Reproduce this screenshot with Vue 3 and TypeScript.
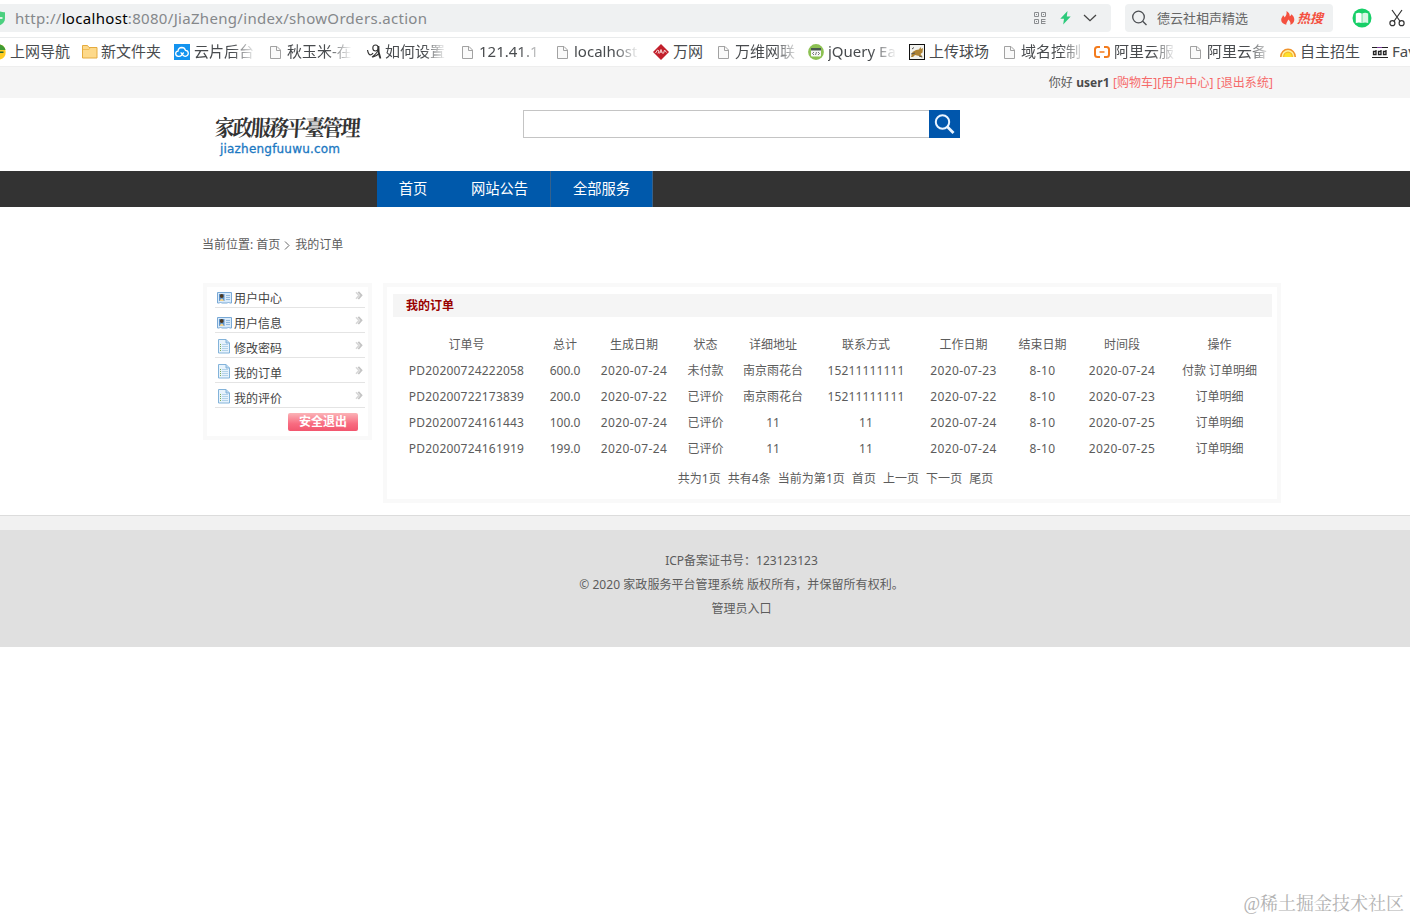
<script setup lang="ts">
interface Bookmark {
  icon: string
  label: string
  fade?: boolean
}
interface Order {
  cells: string[]
}
interface MenuItem {
  icon: 'card' | 'doc'
  label: string
}

const bookmarks: Bookmark[] = [
  { icon: 'nav', label: '上网导航' },
  { icon: 'folder', label: '新文件夹' },
  { icon: 'cloud', label: '云片后台', fade: true },
  { icon: 'file', label: '秋玉米-在', fade: true },
  { icon: 'script', label: '如何设置', fade: true },
  { icon: 'file', label: '121.41.1', fade: true },
  { icon: 'file', label: 'localhost', fade: true },
  { icon: 'diamond', label: '万网' },
  { icon: 'file', label: '万维网联', fade: true },
  { icon: 'jquery', label: 'jQuery Ea', fade: true },
  { icon: 'photo', label: '上传球场' },
  { icon: 'file', label: '域名控制', fade: true },
  { icon: 'aliyun', label: '阿里云服', fade: true },
  { icon: 'file', label: '阿里云备', fade: true },
  { icon: 'rainbow', label: '自主招生' },
  { icon: 'ddd', label: 'Fav' },
]

const navItems: string[] = ['首页', '网站公告', '全部服务']

const menu: MenuItem[] = [
  { icon: 'card', label: '用户中心' },
  { icon: 'card', label: '用户信息' },
  { icon: 'doc', label: '修改密码' },
  { icon: 'doc', label: '我的订单' },
  { icon: 'doc', label: '我的评价' },
]

const headers: string[] = ['订单号', '总计', '生成日期', '状态', '详细地址', '联系方式', '工作日期', '结束日期', '时间段', '操作']

const orders: Order[] = [
  { cells: ['PD20200724222058', '600.0', '2020-07-24', '未付款', '南京雨花台', '15211111111', '2020-07-23', '8-10', '2020-07-24', '付款 订单明细'] },
  { cells: ['PD20200722173839', '200.0', '2020-07-22', '已评价', '南京雨花台', '15211111111', '2020-07-22', '8-10', '2020-07-23', '订单明细'] },
  { cells: ['PD20200724161443', '100.0', '2020-07-24', '已评价', '11', '11', '2020-07-24', '8-10', '2020-07-25', '订单明细'] },
  { cells: ['PD20200724161919', '199.0', '2020-07-24', '已评价', '11', '11', '2020-07-24', '8-10', '2020-07-25', '订单明细'] },
]

const pager: string[] = ['共为1页', '共有4条', '当前为第1页', '首页', '上一页', '下一页', '尾页']
</script>

<template>
  <div class="window">
    <div class="toolbar">
      <div class="address">
        <svg class="shield" width="6" height="18" viewBox="0 0 6 18">
          <path d="M0 2.500C2 3 3.500 3.300 5 3.200V9.500C5 12.500 3 15 0 16.300Z" fill="#4bd07f" />
          <path d="M0 8.200H2.500V9.800H0Z" fill="#fff" />
        </svg>
        <span class="url">http://<b>localhost</b>:8080/JiaZheng/index/showOrders.action</span>
        <svg class="qr" width="12" height="12" viewBox="0 0 12 12" fill="none" stroke="#8a8d90">
          <path d="M.5.5h4v4h-4zM7.500.5h4v4h-4zM.5 7.500h4v4h-4zM7.500 7.500h4M7.500 9.500h4M7.500 11.500h4M7.500 7v5M2 2.500h1M9 2.500h1M2 9.500h1" />
        </svg>
        <svg class="bolt" width="11" height="14" viewBox="0 0 11 14">
          <path d="M7.500 0L.3 7.700H4L3.200 13.500L10.700 5.500H6.800Z" fill="#2cca7b" />
        </svg>
        <svg class="chev" width="14" height="8" viewBox="0 0 14 8" fill="none" stroke="#444" stroke-width="1.300">
          <path d="M1 1l6 5.700L13 1" />
        </svg>
      </div>
      <div class="quick">
        <svg width="16" height="16" viewBox="0 0 16 16" fill="none" stroke="#4b4e52" stroke-width="1.300">
          <circle cx="6.500" cy="7" r="5.800" />
          <path d="M10.700 11.200L14.500 15" />
        </svg>
        <span class="quick-text">德云社相声精选</span>
        <svg class="flame" width="14" height="14" viewBox="0 0 14 14">
          <path d="M5.500 0C8 1.400 9 3.500 8.700 5.300C9.600 4.900 10 4.200 10.200 3.300C12 4.600 13.500 6.400 13.300 9C13.100 11.700 11.200 13.200 9.200 13.800C10 11.800 9.200 10 7.300 8.400C7 10 5.300 10.800 5.200 13.700C2.200 12.900.2 11.500.2 8.900C.2 7 1.500 6 2 4.300C2.900 4.900 3.300 5.500 3.400 6.400C5.200 5 6 2.600 5.500 0Z" fill="#f4503f" />
        </svg>
        <span class="hot">热搜</span>
      </div>
      <svg class="book" width="20" height="20" viewBox="0 0 20 20">
        <circle cx="10" cy="10" r="9.500" fill="#17cf68" />
        <path d="M3.800 5.500Q7 4 9.700 5.500V15Q7 14 3.800 15Z" fill="#fff" />
        <path d="M10.300 5.500Q13 4 16.200 5.500V15Q13 14 10.300 15Z" fill="#d8f7e5" />
      </svg>
      <svg class="scissors" width="16" height="18" viewBox="0 0 16 18" fill="none" stroke="#333" stroke-width="1.200">
        <path d="M3 1l8.200 11.500M13 1L4.800 12.500" />
        <circle cx="3.400" cy="14.200" r="2.500" />
        <circle cx="12.600" cy="14.200" r="2.500" />
      </svg>
    </div>

    <div class="bookmarks">
      <div v-for="(b, i) in bookmarks" :key="i" class="bm" :class="'bm-' + b.icon">
        <svg v-if="b.icon === 'nav'" class="ico" width="6" height="16" viewBox="0 0 6 16">
          <path d="M0 .5Q5.700 2 5.700 8Q5.700 14 0 15.500Z" fill="#fc2" />
          <path d="M0 .5Q4.500 1.500 5.500 6H0Z" fill="#3f9b34" />
          <path d="M0 7.500H3.500V9H0Z" fill="#263" />
        </svg>
        <svg v-else-if="b.icon === 'folder'" class="ico" width="16" height="16" viewBox="0 0 16 16">
          <path d="M.5 1.500h5l1.500 2h8v10.500H.5Z" fill="#fdd98a" stroke="#e5ab3e" />
          <path d="M1 5.500h6l1-1.500" stroke="#f0bd58" fill="none" />
        </svg>
        <svg v-else-if="b.icon === 'cloud'" class="ico" width="16" height="16" viewBox="0 0 16 16">
          <rect width="16" height="16" fill="#1393ef" />
          <path d="M9.700 8.500L7.500 11.200Q6.300 12.500 4.300 12.300Q1.700 12 1.700 9.700Q1.700 7.500 4 7.200Q4.300 3.700 7.800 3.500Q10.700 3.500 11.500 6.400Q14.300 6.700 14.300 9.300Q14.200 12.100 11.300 12.300Q9.300 12.300 6.700 8.400" fill="none" stroke="#fff" stroke-width="1.300" />
        </svg>
        <svg v-else-if="b.icon === 'file'" class="ico" width="12" height="16" viewBox="0 0 12 16">
          <path d="M.5 2.500h6.500l3.500 3.500v8.500H.5Z" fill="#fafafa" stroke="#a2a2a2" />
          <path d="M6.500 2.500v4h4" fill="none" stroke="#a2a2a2" />
        </svg>
        <svg v-else-if="b.icon === 'script'" class="ico" width="15" height="16" viewBox="0 0 15 16" fill="none" stroke="#333">
          <path d="M.5 6Q1.500 12 4.500 10.500Q5.500 10 6 9" stroke-width="1.200" />
          <ellipse cx="8.500" cy="4" rx="2.700" ry="3" stroke-width="1.100" />
          <path d="M11.500 2Q11 9 13.500 14.500" stroke-width="1.700" />
          <path d="M11.500 6.500Q8 11 5 13.200M6 13Q9 12.500 12 9.500" stroke-width="1.100" />
        </svg>
        <svg v-else-if="b.icon === 'diamond'" class="ico" width="16" height="16" viewBox="0 0 16 16">
          <path d="M8 0l8 8-8 8-8-8Z" fill="#c21f2b" />
          <path d="M2.500 9l2-3 1.500 1-1 2.500M6.500 9.500L8 5.500l1.500 4M7 8h2M10.500 9.500L11.500 6l2 2.500" fill="none" stroke="#f6d5d5" />
        </svg>
        <svg v-else-if="b.icon === 'jquery'" class="ico" width="16" height="16" viewBox="0 0 16 16">
          <circle cx="8" cy="8" r="7.900" fill="#8cc152" />
          <rect x="3" y="4" width="10" height="8.500" rx="1" fill="#f6f7f6" />
          <path d="M3 4h10v2.500H3Z" fill="#4a5950" />
          <path d="M6 8l-1.500 1.500L6 11M10 8l1.500 1.500L10 11M8.500 8l-1 3" fill="none" stroke="#555" stroke-width=".8" />
        </svg>
        <svg v-else-if="b.icon === 'photo'" class="ico" width="16" height="16" viewBox="0 0 16 16">
          <rect x=".5" y=".5" width="15" height="15" fill="#f2f2ee" stroke="#111" />
          <path d="M2 13l1.500-5L7 6l3-.5L11.500 3l.7 2L14 4l-.5 4.500-2 1.500 2.500 3.500-4-1.500-4-1L4 13Z" fill="#ad8233" />
          <path d="M3 5l2-1.500M2 10l4-1M10 12l3 1" stroke="#555" />
        </svg>
        <svg v-else-if="b.icon === 'aliyun'" class="ico" width="16" height="16" viewBox="0 0 16 16" fill="none" stroke="#f37b1d" stroke-width="2">
          <path d="M6 3H3.500Q1 3 1 5.500v5Q1 13 3.500 13H6M10 3h2.500Q15 3 15 5.500v5Q15 13 12.500 13H10" />
          <path d="M5.500 8h5" stroke-width="1.500" />
        </svg>
        <svg v-else-if="b.icon === 'rainbow'" class="ico" width="16" height="16" viewBox="0 0 16 16">
          <path d="M0 13a8 8.500 0 0 1 16 0Z" fill="#f0932c" />
          <path d="M1.500 13a6.500 7 0 0 1 13 0Z" fill="#fff3a0" />
          <path d="M3 13a5 5.500 0 0 1 10 0Z" fill="#f6b82a" />
          <path d="M4.200 13a3.800 4.300 0 0 1 7.600 0Z" fill="#fde02c" />
        </svg>
        <svg v-else class="ico" width="16" height="16" viewBox="0 0 16 16" fill="none" stroke="#222">
          <path d="M0 3.500h16M0 13.500h16" />
          <path d="M1.500 7.500h2.500v3H1.500zM6.500 7.500H9v3H6.500zM11.500 7.500H14v3h-2.500zM4 6v2M9 6v2M14 6v2" stroke-width="1.300" />
          <path d="M5 3.500h5" stroke="#7c3d9a" />
        </svg>
        <span class="bm-label" :class="{ fade: b.fade }">{{ b.label }}</span>
      </div>
    </div>

    <div class="userbar">
      <span>你好 <strong>user1</strong> <a class="red">[购物车][用户中心] [退出系统]</a></span>
    </div>

    <header class="header">
      <div class="logo">
        <div class="logo-cn">家政服務平臺管理</div>
        <div class="logo-en">jiazhengfuuwu.com</div>
      </div>
      <div class="search">
        <div class="field"></div>
        <div class="go">
          <svg width="21" height="21" viewBox="0 0 21 21" fill="none" stroke="#eaf4ff">
            <circle cx="8.500" cy="8" r="6.700" stroke-width="2" />
            <path d="M13.300 12.800L19.500 19" stroke-width="2.800" />
          </svg>
        </div>
      </div>
    </header>

    <nav class="nav">
      <a v-for="n in navItems" :key="n">{{ n }}</a>
    </nav>

    <div class="crumb">
      <span>当前位置: 首页</span>
      <svg width="6" height="9" viewBox="0 0 6 9" fill="none" stroke="#666"><path d="M1 .5l4 4-4 4" /></svg>
      <span>我的订单</span>
    </div>

    <main class="main">
      <aside class="side">
        <div v-for="m in menu" :key="m.label" class="side-row">
          <svg v-if="m.icon === 'card'" class="side-ico" width="16" height="16" viewBox="0 0 16 16">
            <path d="M.5 2.500h14v10.500h-2l-1-1-1 1h-6l-1-1-1 1h-2Z" fill="#d8eafa" stroke="#79a9d6" />
            <rect x="2" y="4" width="5.500" height="7" fill="#5e94cb" />
            <circle cx="4.700" cy="6" r="1.900" fill="#4d3820" />
            <path d="M2.500 11q2.200-5 4.500 0Z" fill="#f3d28b" />
            <path d="M9 5.500h4M9 7.500h4M9 9.500h4" stroke="#92b9dd" />
          </svg>
          <svg v-else class="side-ico" width="16" height="16" viewBox="0 0 16 16">
            <path d="M1.500 1.500h7.500l3.500 3.500v10H1.500Z" fill="#e7f3fc" stroke="#83b3da" />
            <path d="M9 1.500V5H12.500" fill="#b9d7ef" stroke="#83b3da" />
            <path d="M5 6.500h6M5 8.500h6M5 10.500h6M5 12.500h6" stroke="#b3d2ea" />
            <path d="M3 6.500h1M3 8.500h1M3 10.500h1M3 12.500h1" stroke="#7dac57" />
          </svg>
          <span>{{ m.label }}</span>
          <svg class="arrow" width="8" height="9" viewBox="0 0 8 9" fill="none">
            <path d="M1 1.200l3 3.300-3 3.300" stroke="#d8d8d8" stroke-width="1.500" />
            <path d="M3.300.8l3.200 3.500L3.300 8" stroke="#c4c4c4" stroke-width="1.800" />
          </svg>
        </div>
        <div class="exit">安全退出</div>
      </aside>

      <section class="panel">
        <h3>我的订单</h3>
        <div class="orders">
          <div class="row">
            <span v-for="h in headers" :key="h">{{ h }}</span>
          </div>
          <div v-for="o in orders" :key="o.cells[0]" class="row data">
            <span v-for="(c, i) in o.cells" :key="i">{{ c }}</span>
          </div>
        </div>
        <div class="pager">
          <span v-for="p in pager" :key="p">{{ p }}</span>
        </div>
      </section>
    </main>

    <div class="strip"></div>
    <footer class="footer">
      <p>ICP备案证书号：123123123</p>
      <p class="copy">© 2020 家政服务平台管理系统 版权所有，并保留所有权利。</p>
      <p>管理员入口</p>
    </footer>

    <div class="mark">@稀土掘金技术社区</div>
  </div>
</template>

<style>
html,
body {
  margin: 0;
  background: #fff;
  overflow: hidden;
}
</style>

<style scoped>
.window {
  position: relative;
  width: 1410px;
  height: 920px;
  overflow: hidden;
  background: #fff;
  color: #5c5c5c;
  font-family: "Noto Sans", "Noto Sans CJK SC", sans-serif;
  font-size: 12px;
}
svg {
  display: block;
  flex: none;
}
.toolbar {
  display: flex;
  align-items: center;
  height: 38px;
  box-sizing: border-box;
  padding-bottom: 1px;
  border-bottom: 1px solid #e9ebec;
  white-space: nowrap;
}
.address {
  display: flex;
  align-items: center;
  width: 1111px;
  height: 28px;
  background: #eff1f2;
  border-radius: 0 4px 4px 0;
}
.url {
  width: 1018px;
  margin-left: 9px;
  font-size: 15px;
  line-height: 28px;
  letter-spacing: 0.31px;
  color: #85888b;
}
.url b {
  font-weight: 400;
  color: #000;
}
.qr {
  margin-left: 1px;
}
.bolt {
  margin-left: 14px;
}
.chev {
  margin-left: 12px;
}
.quick {
  display: flex;
  align-items: center;
  width: 208px;
  height: 28px;
  margin-left: 14px;
  padding-left: 7px;
  box-sizing: border-box;
  background: #eff1f2;
  border-radius: 4px;
}
.quick-text {
  width: 124px;
  margin-left: 9px;
  font-size: 13px;
  line-height: 28px;
  color: #666;
}
.hot {
  margin: -1px 0 0 2px;
  font-size: 13px;
  font-weight: 700;
  font-style: italic;
  color: #f4503f;
}
.book {
  margin-left: 19px;
}
.scissors {
  margin-left: 17px;
}
.bookmarks {
  display: grid;
  grid-template-columns: 82px 92px 96px 97px 95px 95px 96px 65px 90px 101px 95px 90px 96px 90px 92px 60px;
  height: 29px;
  box-sizing: border-box;
  border-bottom: 1px solid #eee;
}
.bm {
  display: flex;
  align-items: center;
  height: 28px;
  min-width: 0;
  overflow: hidden;
  white-space: nowrap;
}
.bm-label {
  height: 28px;
  margin-left: 4px;
  font-size: 15px;
  line-height: 26px;
  color: #484b4e;
}
.bm-folder .bm-label,
.bm-script .bm-label {
  margin-left: 3px;
}
.bm-file .bm-label {
  margin-left: 5px;
}
.fade {
  width: 62px;
  overflow: hidden;
  mask-image: linear-gradient(90deg, #000 62%, transparent 100%);
}
.bm-file .fade {
  width: 65px;
}
.bm-jquery .fade {
  width: 69px;
}
.userbar {
  height: 31px;
  padding-right: 137px;
  background: #f5f5f5;
  line-height: 32px;
  text-align: right;
  letter-spacing: 0.07px;
}
.userbar strong {
  color: #4a4a4a;
}
.red {
  color: #f56a6a;
}
.header {
  display: flex;
  height: 73px;
}
.logo {
  width: 308px;
  padding: 14px 0 0 215px;
}
.logo-cn {
  width: 148px;
  height: 29px;
  font-family: "Noto Serif CJK TC", "Noto Sans CJK TC", sans-serif;
  font-size: 20px;
  font-weight: 700;
  line-height: 30px;
  letter-spacing: -2px;
  color: #333;
  white-space: nowrap;
  transform: skewX(-4deg) scaleY(1.120);
}
.logo-en {
  padding-left: 5px;
  font-family: "DejaVu Sans", sans-serif;
  font-size: 12px;
  line-height: 16px;
  letter-spacing: 0.2px;
  color: #1b78c2;
  -webkit-text-stroke: 0.3px #1b78c2;
}
.search {
  display: flex;
  width: 437px;
  height: 28px;
  margin-top: 12px;
}
.field {
  flex: 1;
  border: 1px solid #c4c4c4;
  border-right: 0;
}
.go {
  display: flex;
  align-items: center;
  justify-content: center;
  width: 31px;
  background: #0056ac;
}
.nav {
  display: flex;
  height: 36px;
  padding-left: 377px;
  background: #333;
}
.nav a {
  box-sizing: border-box;
  width: 102px;
  background: #0059ab;
  color: #fff;
  font-size: 14.300px;
  line-height: 36px;
  text-align: center;
  border-right: 1px solid #35618c;
}
.nav a:first-child {
  width: 72px;
  border-right: 0;
}
.crumb {
  display: flex;
  align-items: center;
  height: 76px;
  padding-left: 202px;
}
.crumb span {
  margin-top: -2px;
}
.crumb svg {
  margin: 0 5px 0 4px;
}
.main {
  display: flex;
  align-items: flex-start;
  height: 232px;
  padding: 0 0 0 203px;
}
.side {
  box-sizing: border-box;
  width: 169px;
  height: 157px;
  border: 4px solid #f9f9f9;
  padding: 0 2px 0 8px;
}
.side-row {
  display: flex;
  align-items: flex-start;
  height: 25px;
  width: 150px;
  box-sizing: border-box;
  border-bottom: 1px solid #e4e4e4;
  color: #444;
}
.side-row span {
  margin: 7px 0 0 1px;
  line-height: 18px;
}
.side-ico {
  margin: 7px 0 0 2px;
}
.side-row:nth-child(n + 3) .side-ico {
  margin-top: 5px;
}
.arrow {
  margin: 8px 2px 0 auto;
}
.side-row:first-child {
  height: 21px;
}
.side-row:first-child span {
  margin-top: 3px;
}
.side-row:first-child .side-ico {
  margin-top: 3px;
}
.side-row:first-child .arrow {
  margin-top: 4px;
}
.exit {
  width: 70px;
  height: 18px;
  margin: 5px 0 0 73px;
  border-radius: 2px;
  background: linear-gradient(#fbb3b7, #f86b80 60%, #f2566e);
  color: #fff;
  font-weight: 700;
  line-height: 18px;
  text-align: center;
}
.panel {
  box-sizing: border-box;
  width: 898px;
  height: 220px;
  margin-left: 11px;
  border: 4px solid #f9f9f9;
  padding: 7px 5px 0 6px;
}
.panel h3 {
  height: 23px;
  margin: 0;
  padding-left: 13px;
  background: #f5f5f5;
  color: #900;
  font-size: 12px;
  line-height: 24px;
}
.orders {
  padding: 15px 0 0 3px;
}
.row {
  display: grid;
  grid-template-columns: 141px 56px 82px 61px 74px 112px 83px 75px 84px 111px;
  height: 26px;
  line-height: 26px;
  text-align: center;
  white-space: nowrap;
}
.data span:nth-child(1) {
  letter-spacing: 0.2px;
}
.data span:nth-child(3),
.data span:nth-child(7),
.data span:nth-child(8),
.data span:nth-child(9) {
  letter-spacing: 0.37px;
}
.data span:nth-child(6) {
  letter-spacing: 0.14px;
}
.pager {
  display: flex;
  justify-content: center;
  gap: 7px;
  padding: 5px 0 0 6px;
  line-height: 24px;
  letter-spacing: 0.04px;
}
.strip {
  height: 15px;
  box-sizing: border-box;
  border-top: 1px solid #dcdcdc;
  background: #f1f1f1;
}
.footer {
  height: 117px;
  box-sizing: border-box;
  padding: 19px 0 0 73px;
  background: #e0e0e0;
  text-align: center;
}
.footer p {
  margin: 0;
  line-height: 24px;
}
.copy {
  letter-spacing: 0.06px;
}
.mark {
  position: absolute;
  right: 6px;
  bottom: 2px;
  font-family: "Liberation Serif", "Noto Serif CJK SC", "Noto Sans CJK SC", serif;
  font-size: 18px;
  line-height: 28px;
  color: #b2b2b2;
}
</style>
